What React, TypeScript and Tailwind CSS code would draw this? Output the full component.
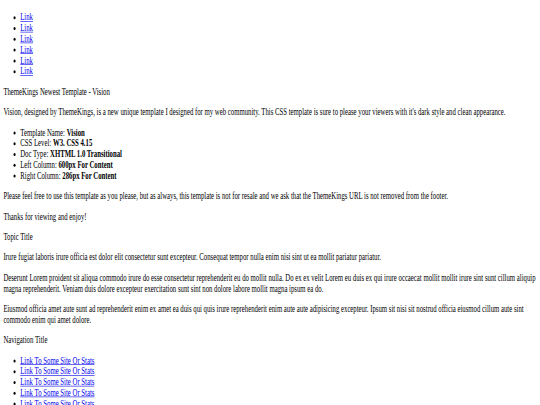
const topLinks = ['Link', 'Link', 'Link', 'Link', 'Link', 'Link']

const specs: [string, string][] = [
  ['Template Name:', 'Vision'],
  ['CSS Level:', 'W3. CSS 4.15'],
  ['Doc Type:', 'XHTML 1.0 Transitional'],
  ['Left Column:', '600px For Content'],
  ['Right Column:', '286px For Content'],
]

const navLinks = Array.from({ length: 8 }, () => 'Link To Some Site Or Stats')

function LinkList({ items, className }: { items: string[]; className: string }) {
  return (
    <ul className={className}>
      {items.map((label, i) => (
        <li key={i}>
          <a href="#" className="text-[#0000ee] underline">
            {label}
          </a>
        </li>
      ))}
    </ul>
  )
}

export default function App() {
  return (
    <div className="h-[405px] w-[540px] overflow-hidden bg-white">
      {/* page laid out at 1280px, then squeezed to fit the window */}
      <div className="w-[1280px] origin-top-left scale-x-[0.421875] scale-y-[0.6] px-2 font-['Liberation_Serif',serif] text-[16px] leading-[normal] text-black">
        <LinkList items={topLinks} className="mt-[12px] mb-4 list-disc pl-10" />

        <p className="my-4">ThemeKings Newest Template - Vision</p>
        <p className="my-4">
          Vision, designed by ThemeKings, is a new unique template I designed for my web community. This CSS
          template is sure to please your viewers with it's dark style and clean appearance.
        </p>

        <ul className="my-4 list-disc pl-10">
          {specs.map(([label, value]) => (
            <li key={label}>
              {label} <strong className="font-bold">{value}</strong>
            </li>
          ))}
        </ul>

        <p className="my-4">
          Please feel free to use this template as you please, but as always, this template is not for resale and we
          ask that the ThemeKings URL is not removed from the footer.
        </p>
        <p className="my-4">Thanks for viewing and enjoy!</p>

        <p className="my-4">Topic Title</p>
        <p className="my-4">
          Irure fugiat laboris irure officia est dolor elit consectetur sunt excepteur. Consequat tempor nulla enim nisi
          sint ut ea mollit pariatur pariatur.
        </p>
        <p className="my-4">
          Deserunt Lorem proident sit aliqua commodo irure do esse consectetur reprehenderit eu do mollit nulla. Do ex
          ex velit Lorem eu duis ex qui irure occaecat mollit mollit irure sint sunt cillum aliquip magna
          reprehenderit. Veniam duis dolore excepteur exercitation sunt sint non dolore labore mollit magna ipsum ea
          do.
        </p>
        <p className="my-4">
          Eiusmod officia amet aute sunt ad reprehenderit enim ex amet ea duis qui quis irure reprehenderit enim aute
          aute adipisicing excepteur. Ipsum sit nisi sit nostrud officia eiusmod cillum aute sint commodo enim qui amet
          dolore.
        </p>

        <p className="my-4">Navigation Title</p>
        <LinkList items={navLinks} className="my-4 list-disc pl-10" />
      </div>
    </div>
  )
}
